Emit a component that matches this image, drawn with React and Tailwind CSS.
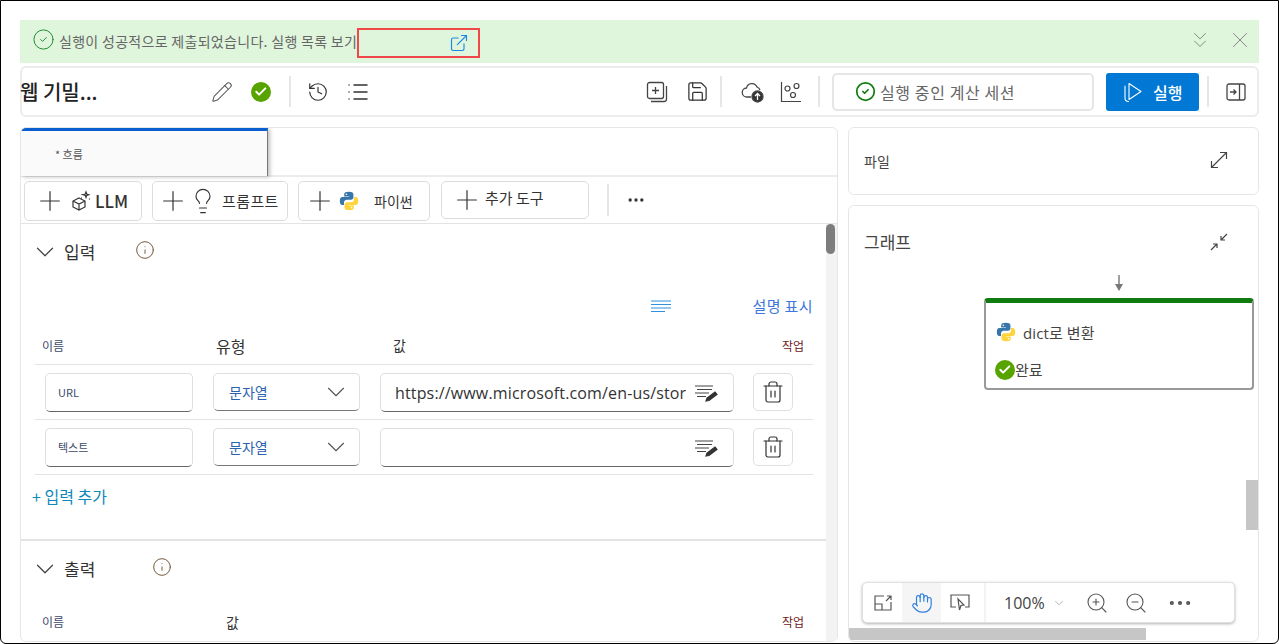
import React from 'react';
import {
    Pencil,
    History,
    List,
    Save,
    ExternalLink,
    ChevronsDown,
    X,
    ChevronDown,
    Plus,
    Lightbulb,
    Trash2,
    Info,
    Hand,
    ZoomIn,
    ZoomOut,
    Ellipsis,
    Check,
    CircleCheck
} from 'lucide-react';

const Python = ({ size = 20 }) => (
    <svg width={size} height={size} viewBox="0 0 24 24">
        <path fill="#3776ab" d="M11.9 1C8 1 6.2 2 6.2 4v2.5h5.9v.8H4C2 7.3 1 9 1 12s1 4.7 3 4.7h2v-2.8c0-2 1.6-3.4 3.5-3.4h5c1.6 0 2.8-1.3 2.8-2.9V4c0-2-2-3-5.4-3z" />
        <circle cx="8.8" cy="3.9" r="1" fill="#fff" />
        <g transform="rotate(180 12 12)">
            <path fill="#ffd43b" d="M11.9 1C8 1 6.2 2 6.2 4v2.5h5.9v.8H4C2 7.3 1 9 1 12s1 4.7 3 4.7h2v-2.8c0-2 1.6-3.4 3.5-3.4h5c1.6 0 2.8-1.3 2.8-2.9V4c0-2-2-3-5.4-3z" />
            <circle cx="8.8" cy="3.9" r="1" fill="#fff" />
        </g>
    </svg>
);

const GreenCheck = ({ size = 20, className = '' }) => (
    <span className={`flex items-center justify-center rounded-full bg-[#57a300] shrink-0 ${className}`} style={{ width: size, height: size }}>
        <Check size={size * 0.68} color="#fff" strokeWidth={3.5} />
    </span>
);

const Cube = () => (
    <svg width="22" height="22" viewBox="0 0 22 22" fill="none" stroke="#333" strokeWidth="1.2">
        <path d="M9 8l6 3v6l-6 3-6-3v-6zM3 11l6 3 6-3M9 14v6" />
        <path d="M16 2l.7 2 2 .7-2 .7-.7 2-.7-2-2-.7 2-.7zM19.5 8.5v1M12 4v1M11 8h1" />
    </svg>
);

const EditLines = () => (
    <svg width="24" height="20" viewBox="0 0 24 20" fill="none" stroke="#444" strokeWidth="1.2">
        <path d="M1 3h18M3 6.500h15M1 10h14M3 13.500h9" />
        <path d="M12 18l1-3 8-6 2 2.500-8 6z" fill="#333" stroke="#333" />
    </svg>
);

const StackAdd = () => (
    <svg width="22" height="22" viewBox="0 0 22 22" fill="none" stroke="#444" strokeWidth="1.3">
        <rect x="1.500" y="1.500" width="16" height="16" rx="2" />
        <path d="M9.500 6v7M6 9.500h7M20.500 5v13a2.500 2.500 0 0 1-2.500 2.500H5" />
    </svg>
);

const CloudUp = () => (
    <svg width="24" height="22" viewBox="0 0 24 22" fill="none" stroke="#444" strokeWidth="1.3">
        <path d="M10 16H6a4.500 4.500 0 0 1-.5-9 5.500 5.500 0 0 1 10.500-1 5 5 0 0 1 3 3" />
        <circle cx="16.500" cy="15.500" r="5.500" fill="#333" />
        <path d="M16.500 19v-6M14 15l2.500-2.500L19 15" stroke="#fff" />
    </svg>
);

const Metrics = () => (
    <svg width="22" height="22" viewBox="0 0 22 22" fill="none" stroke="#444" strokeWidth="1.2">
        <path d="M1.500 1v19.500H21" />
        <circle cx="7.500" cy="7.500" r="2.500" />
        <circle cx="16.500" cy="5" r="2.500" />
        <circle cx="13" cy="14" r="2.500" />
    </svg>
);

const PlayStack = () => (
    <svg width="20" height="22" viewBox="0 0 20 22" fill="none" stroke="#fff" strokeWidth="1.1">
        <path d="M6 2.500l12 8-12 8z" strokeLinejoin="round" />
        <path d="M2 5v12c0 2 1 3.500 3.500 3.500" strokeLinecap="round" />
    </svg>
);

const PanelArrow = () => (
    <svg width="20" height="18" viewBox="0 0 20 18" fill="none" stroke="#444" strokeWidth="1.3">
        <rect x="1" y="1" width="18" height="16" rx="2" />
        <path d="M13.500 1v16M4 9h6M7.500 6.500L10 9l-2.500 2.500" />
    </svg>
);

const ListBlue = () => (
    <svg width="20" height="14" viewBox="0 0 20 14" fill="none" stroke="#2f8fe0" strokeWidth="1.2">
        <path d="M0 1h20M0 4.500h20M0 8h20M0 11.500h14" />
    </svg>
);

const FitView = () => (
    <svg width="18" height="16" viewBox="0 0 18 16" fill="none" stroke="#555" strokeWidth="1.2">
        <path d="M10 1H1v14h16V7M1 9h7v6M12 6l5-5M13 1h4v4" />
    </svg>
);

const Pointer = () => (
    <svg width="20" height="17" viewBox="0 0 20 17" fill="none" stroke="#555" strokeWidth="1.2">
        <path d="M6 13H1V1h18v12h-4" />
        <path d="M8 5l6 6-3 .5L9.500 16z" />
    </svg>
);

const ToolButton = ({ className, children }) => (
    <button className={`flex items-center shrink-0 bg-white rounded-[5px] border border-[#dcdcdc] text-[#333] ${className}`}>
        {children}
    </button>
);

const Divider = ({ className = '' }) => <div className={`w-[2px] h-[31px] bg-[#e6e6e6] shrink-0 ${className}`} />;

const TableHead = ({ second, third, thirdClass = '' }) => (
    <div className="h-full flex items-center pl-[7px]">
        <span className="w-[174px] text-[12px] text-[#3e4a6b]">이름</span>
        {second && <span className="w-[177px] text-[16px] text-[#333]">{second}</span>}
        <span className={`text-[14px] text-[#333] ${thirdClass}`}>{third}</span>
        <span className="ml-auto mr-[9px] text-[12px] text-[#6b2222]">작업</span>
    </div>
);

const InputRow = ({ name, value }) => (
    <div className="h-[55px] border-b border-[#e3e3e3] flex items-start pt-[8px] pl-[10px]">
        <div className="w-[148px] h-[39px] flex items-center pl-[12px] rounded-[5px] border border-[#dedede] border-b-[#666] text-[11px] text-[#3e4a6b]">
            {name}
        </div>
        <div className="ml-[20px] w-[147px] h-[38px] flex items-center justify-between pl-[15px] pr-[8px] rounded-[5px] border border-[#dedede] border-b-[#777] text-[14px] text-[#2a62ad]">
            문자열
            <ChevronDown size={30} color="#555" strokeWidth={0.9} />
        </div>
        <div className="ml-[20px] w-[354px] h-[39px] flex items-center justify-between pl-[14px] pr-[15px] rounded-[5px] border border-[#dedede] border-b-[#666] font-['Open_Sans',sans-serif] text-[16px] tracking-[0.15px] text-[#333] whitespace-nowrap">
            <span>{value}</span>
            <EditLines />
        </div>
        <div className="ml-[19px] w-[40px] h-[38px] flex items-center justify-center rounded-[5px] border border-[#e0e0e0]">
            <Trash2 size={24} color="#333" strokeWidth={1.2} />
        </div>
    </div>
);

const SectionHeader = ({ title, infoClass }) => (
    <div className="h-[56px] flex items-center pl-[9px] shrink-0">
        <ChevronDown size={30} color="#444" strokeWidth={1} />
        <span className="ml-[4px] text-[17px] text-[#333]">{title}</span>
        <Info size={20} color="#6b4a2a" strokeWidth={1.1} className={infoClass} />
    </div>
);

const App = () => {
    return (
        <div className="relative w-[1279px] h-[644px] overflow-hidden bg-white border border-black rounded-b-[6px] px-[19px] pt-[19px] font-['Noto_Sans_CJK_KR','Noto_Sans',sans-serif]">
            {/* Notification banner */}
            <div className="h-[43px] w-[1239px] bg-[#dff5dc] flex items-center pl-[12px] pr-[6px]">
                <CircleCheck size={23} color="#1b8a2a" strokeWidth={1} className="-mt-[4px]" />
                <span className="ml-[4px] text-[14px] tracking-[0.3px] text-[#666] whitespace-nowrap">실행이 성공적으로 제출되었습니다. 실행 목록 보기</span>
                <div className="h-[30px] w-[123px] border-2 border-[#f04848] flex items-center justify-end pr-[9px] mt-[2px]">
                    <ExternalLink size={20} color="#1e88e5" strokeWidth={1.4} />
                </div>
                <ChevronsDown size={26} color="#777" strokeWidth={0.8} className="ml-auto -mt-[4px]" />
                <X size={26} color="#777" strokeWidth={0.8} className="ml-[14px] -mt-[4px]" />
            </div>

            {/* Toolbar */}
            <div className="mt-[3px] h-[51px] w-[1239px] rounded-[6px] border-2 border-[#ececec] flex items-center">
                <span className="-ml-[2px] w-[191px] text-[20px] font-medium text-[#222] whitespace-nowrap">웹 기밀...</span>
                <Pencil size={22} color="#555" strokeWidth={1.1} />
                <GreenCheck size={20} className="ml-[18px]" />
                <Divider className="ml-[18px]" />
                <History size={22} color="#333" strokeWidth={1.3} className="ml-[16px]" />
                <List size={24} color="#333" strokeWidth={1.5} className="ml-[17px]" />
                <div className="ml-[276px]"><StackAdd /></div>
                <Save size={23} color="#333" strokeWidth={1.3} className="ml-[18px]" />
                <Divider className="ml-[11px]" />
                <div className="ml-[19px]"><CloudUp /></div>
                <div className="ml-[15px]"><Metrics /></div>
                <Divider className="ml-[16px]" />
                <div className="ml-[12px] w-[262px] h-[38px] flex items-center pl-[21px] rounded-[5px] border-2 border-[#e6e6e6]">
                    <CircleCheck size={21} color="#107c10" strokeWidth={2} />
                    <span className="ml-[4px] text-[16px] tracking-[0.6px] text-[#666]">실행 중인 계산 세션</span>
                </div>
                <div className="ml-[12px] w-[93px] h-[38px] flex items-center pl-[17px] rounded-[3px] bg-[#0078d4] text-white text-[16px] font-medium">
                    <PlayStack />
                    <span className="ml-[10px]">실행</span>
                </div>
                <Divider className="ml-[8px]" />
                <div className="ml-[17px]"><PanelArrow /></div>
            </div>

            <div className="mt-[10px] flex gap-[10px] items-start">
                {/* Flow editor */}
                <div className="relative w-[818px] h-[515px] rounded-[6px] border border-[#e6e6e6] overflow-hidden">
                    <div className="h-[49px] border-b-2 border-[#ececec]">
                        <div className="w-[247px] h-[48px] border-t-[3px] border-t-[#0a5fd0] border-r border-r-[#777] bg-[#fafafa] shadow-[2px_1px_4px_rgba(0,0,0,0.25)] pl-[34px] pt-[15px] text-[11px] text-[#555]">
                            * 흐름
                        </div>
                    </div>

                    <div className="h-[47px] border-b border-[#e3e3e3] flex items-start pt-[4px] pl-[3px]">
                        <ToolButton className="w-[118px] h-[40px] pl-[9px]">
                            <Plus size={32} strokeWidth={0.9} />
                            <span className="ml-[4px]"><Cube /></span>
                            <span className="ml-[3px] text-[17px] font-medium">LLM</span>
                        </ToolButton>
                        <ToolButton className="ml-[10px] w-[136px] h-[40px] pl-[4px]">
                            <Plus size={32} strokeWidth={0.9} />
                            <Lightbulb size={28} strokeWidth={1} />
                            <span className="ml-[5px] text-[15px] tracking-[0.4px]">프롬프트</span>
                        </ToolButton>
                        <ToolButton className="ml-[10px] w-[132px] h-[40px] pl-[5px]">
                            <Plus size={32} strokeWidth={0.9} />
                            <span className="ml-[3px]"><Python size={20} /></span>
                            <span className="ml-[15px] text-[14px]">파이썬</span>
                        </ToolButton>
                        <ToolButton className="ml-[11px] w-[148px] h-[38px] pl-[9px]">
                            <Plus size={32} strokeWidth={0.9} />
                            <span className="ml-[2px] -mt-[3px] text-[15px]">추가 도구</span>
                        </ToolButton>
                        <div className="ml-[18px] w-[2px] h-[32px] mt-[3px] bg-[#e6e6e6]" />
                        <Ellipsis size={20} color="#333" strokeWidth={2} className="ml-[17px] mt-[9px]" />
                    </div>

                    <div className="w-[806px] flex flex-col">
                        <SectionHeader title="입력" infoClass="ml-[40px] -mt-[4px]" />
                        <div className="h-[54px] flex items-start justify-end pr-[14px] pt-[16px]">
                            <span className="mt-[4px]"><ListBlue /></span>
                            <span className="ml-[81px] -mt-[2px] text-[15px] tracking-[0.4px] text-[#3f78d8] leading-[24px]">설명 표시</span>
                        </div>
                        <div className="ml-[14px] w-[778px] flex flex-col">
                            <div className="h-[31px] pb-[7px] border-b border-[#e3e3e3]">
                                <TableHead second="유형" third="값" />
                            </div>
                            <InputRow name="URL" value="https://www.microsoft.com/en-us/stor" />
                            <InputRow name="텍스트" value="" />
                        </div>
                        <div className="h-[42px] flex items-center pl-[11px] text-[16px] text-[#0f87b8]">+ 입력 추가</div>
                        <div className="h-[24px] border-b-2 border-[#e3e3e3]" />
                        <SectionHeader title="출력" infoClass="ml-[57px] -mt-[4px]" />
                        <div className="ml-[14px] w-[778px] h-[50px]">
                            <TableHead third="값" thirdClass="ml-[10px]" />
                        </div>
                    </div>

                    {/* Scrollbar */}
                    <div className="absolute right-0 top-[96px] bottom-0 w-[11px] bg-[#f3f3f3]">
                        <div className="h-[30px] w-[9px] rounded-full bg-[#7d7d7d]" />
                    </div>
                </div>

                {/* Right column */}
                <div className="w-[411px] flex flex-col gap-[10px]">
                    <div className="h-[68px] rounded-[6px] border border-[#e6e6e6] flex items-center pl-[15px] pr-[30px] justify-between">
                        <span className="text-[14px] text-[#444]">파일</span>
                        <svg width="18" height="18" viewBox="0 0 18 18" fill="none" stroke="#444" strokeWidth="1.2" className="-mt-[2px]">
                            <path d="M1.500 16.500l15-15M10 1.500h6.500V8M1.500 10v6.500H8" />
                        </svg>
                    </div>

                    <div className="relative h-[437px] rounded-[6px] border border-[#e6e6e6] overflow-hidden">
                        <div className="flex items-center justify-between pl-[15px] pr-[30px] pt-[23px]">
                            <span className="text-[17px] text-[#444]">그래프</span>
                            <svg width="18" height="18" viewBox="0 0 18 18" fill="none" stroke="#444" strokeWidth="1.2">
                                <path d="M17 1l-6 6M11 3v4h4M1 17l6-6M3 11h4v4" />
                            </svg>
                        </div>

                        {/* Node on the graph canvas */}
                        <svg width="10" height="16" viewBox="0 0 10 16" fill="#777" className="absolute left-[265px] top-[69px]">
                            <path d="M4.300 0h1.400v9H9l-4 7-4-7h3.300z" />
                        </svg>
                        <div className="absolute left-[135px] top-[92px] w-[270px] h-[92px] rounded-[4px] border-2 border-[#999] border-t-[5px] border-t-[#107c10] bg-white">
                            <div className="flex items-center pl-[10px] pt-[17px]">
                                <Python size={20} />
                                <span className="ml-[7px] mt-[2px] text-[15px] tracking-[0.1px] text-[#444] font-['Open_Sans','Noto_Sans_CJK_KR',sans-serif]">dict로 변환</span>
                            </div>
                            <div className="flex items-center pl-[9px] mt-[14px]">
                                <GreenCheck size={20} />
                                <span className="text-[15px] text-[#444]">완료</span>
                            </div>
                        </div>

                        {/* Canvas scrollbars */}
                        <div className="absolute right-0 top-[274px] w-[12px] h-[50px] bg-[#c6c6c6]" />
                        <div className="absolute left-0 bottom-[1px] w-[297px] h-[12px] bg-[#c6c6c6]" />

                        {/* Canvas controls */}
                        <div className="absolute left-[13px] top-[376px] w-[373px] h-[41px] rounded-[5px] bg-white border border-[#e0e0e0] shadow-[0_1px_3px_rgba(0,0,0,0.3)] flex items-center">
                            <div className="w-[39px] flex justify-center"><FitView /></div>
                            <div className="w-[39px] h-full flex items-center justify-center bg-[#f5f5f5]">
                                <Hand size={22} color="#2f80e0" strokeWidth={1.3} />
                            </div>
                            <div className="w-[45px] h-full flex justify-center items-center border-r-2 border-[#f3f3f3] pr-[5px]"><Pointer /></div>
                            <span className="ml-[18px] text-[16px] text-[#444] font-['Open_Sans',sans-serif]">100%</span>
                            <ChevronDown size={14} color="#999" strokeWidth={1.2} className="ml-[7px]" />
                            <ZoomIn size={24} color="#555" strokeWidth={1.1} className="ml-[19px]" />
                            <ZoomOut size={24} color="#555" strokeWidth={1.1} className="ml-[15px]" />
                            <Ellipsis size={28} color="#555" strokeWidth={1.6} className="ml-[18px]" />
                        </div>
                    </div>
                </div>
            </div>
        </div>
    );
};

export default App;
